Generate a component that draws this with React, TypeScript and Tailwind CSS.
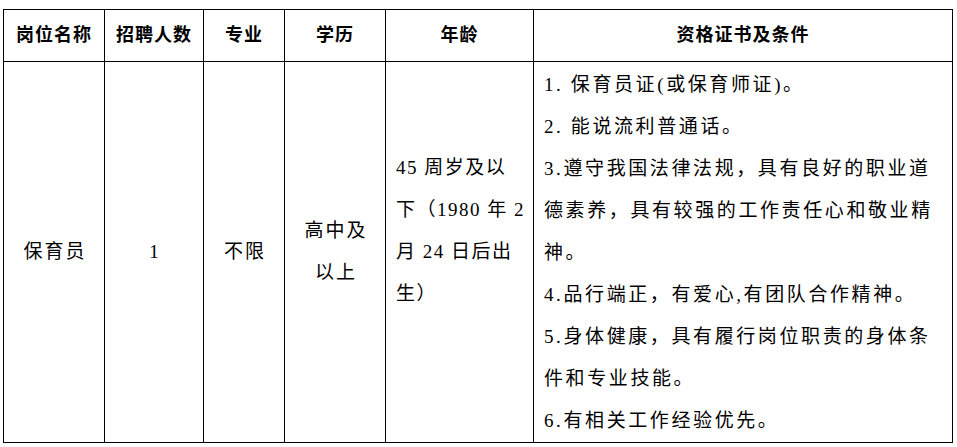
import React from "react";

const font = { fontFamily: '"Liberation Serif", "Noto Sans CJK SC", serif' };

export default function App() {
  const headers = ["岗位名称", "招聘人数", "专业", "学历", "年龄", "资格证书及条件"];
  const quals = [
    "1. 保育员证(或保育师证)。",
    "2. 能说流利普通话。",
    "3.遵守我国法律法规，具有良好的职业道",
    "德素养，具有较强的工作责任心和敬业精",
    "神。",
    "4.品行端正，有爱心,有团队合作精神。",
    "5.身体健康，具有履行岗位职责的身体条",
    "件和专业技能。",
    "6.有相关工作经验优先。",
  ];
  const age = ["45 周岁及以", "下（1980 年 2", "月 24 日后出", "生）"];
  return (
    <div className="w-[957px] h-[447px] bg-white pl-[3px] pt-[9px] text-black" style={font}>
      <table className="table-fixed border-collapse w-[949px]">
        <colgroup>
          <col className="w-[101px]" />
          <col className="w-[99px]" />
          <col className="w-[81px]" />
          <col className="w-[101px]" />
          <col className="w-[148px]" />
          <col className="w-[419px]" />
        </colgroup>
        <thead>
          <tr className="h-[52px]">
            {headers.map((h) => (
              <th
                key={h}
                className="border border-black text-center align-middle font-bold text-[18px] tracking-[1px] p-0"
              >
                {h}
              </th>
            ))}
          </tr>
        </thead>
        <tbody>
          <tr className="h-[380px]">
            <td className="border border-black text-center align-middle text-[19px] tracking-[2px] p-0 pl-[2px]">
              保育员
            </td>
            <td className="border border-black text-center align-middle text-[19px] p-0">1</td>
            <td className="border border-black text-center align-middle text-[19px] tracking-[2px] p-0 pl-[2px]">
              不限
            </td>
            <td className="border border-black text-center align-middle text-[19px] tracking-[2px] leading-[42px] p-0 pl-[2px]">
              <div>高中及</div>
              <div>以上</div>
            </td>
            <td className="border border-black align-middle text-[19px] tracking-[1.5px] leading-[42px] p-0 pl-[10px] pb-[42px] whitespace-nowrap">
              {age.map((l) => (
                <div key={l}>{l}</div>
              ))}
            </td>
            <td className="border border-black align-top text-[19px] tracking-[2.6px] leading-[42px] p-0 pl-[10px] pt-[2px] whitespace-nowrap">
              {quals.map((l) => (
                <div key={l}>{l}</div>
              ))}
            </td>
          </tr>
        </tbody>
      </table>
    </div>
  );
}
